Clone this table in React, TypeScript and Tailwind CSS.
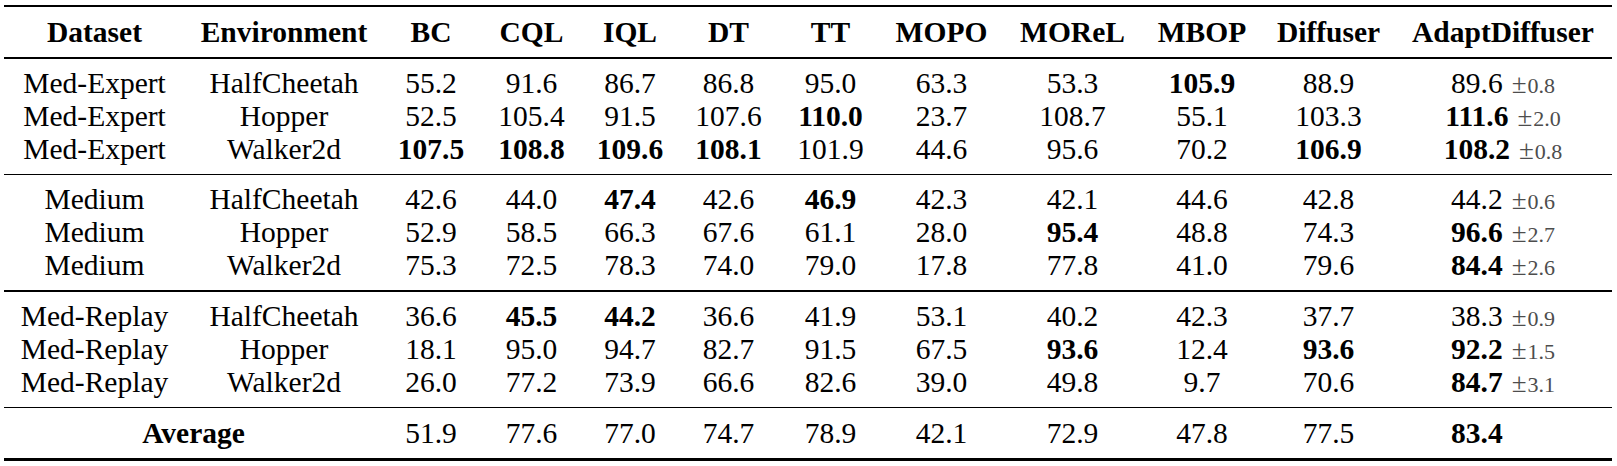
import { Fragment } from "react";

type Row = {
  dataset: string;
  env: string;
  values: string[];
  adapt: string;
  std?: string;
};

// "*" prefix marks the best score in a row (bold)
const groups: Row[][] = [
  [
    { dataset: "Med-Expert", env: "HalfCheetah", values: ["55.2", "91.6", "86.7", "86.8", "95.0", "63.3", "53.3", "*105.9", "88.9"], adapt: "89.6", std: "0.8" },
    { dataset: "Med-Expert", env: "Hopper", values: ["52.5", "105.4", "91.5", "107.6", "*110.0", "23.7", "108.7", "55.1", "103.3"], adapt: "*111.6", std: "2.0" },
    { dataset: "Med-Expert", env: "Walker2d", values: ["*107.5", "*108.8", "*109.6", "*108.1", "101.9", "44.6", "95.6", "70.2", "*106.9"], adapt: "*108.2", std: "0.8" },
  ],
  [
    { dataset: "Medium", env: "HalfCheetah", values: ["42.6", "44.0", "*47.4", "42.6", "*46.9", "42.3", "42.1", "44.6", "42.8"], adapt: "44.2", std: "0.6" },
    { dataset: "Medium", env: "Hopper", values: ["52.9", "58.5", "66.3", "67.6", "61.1", "28.0", "*95.4", "48.8", "74.3"], adapt: "*96.6", std: "2.7" },
    { dataset: "Medium", env: "Walker2d", values: ["75.3", "72.5", "78.3", "74.0", "79.0", "17.8", "77.8", "41.0", "79.6"], adapt: "*84.4", std: "2.6" },
  ],
  [
    { dataset: "Med-Replay", env: "HalfCheetah", values: ["36.6", "*45.5", "*44.2", "36.6", "41.9", "53.1", "40.2", "42.3", "37.7"], adapt: "38.3", std: "0.9" },
    { dataset: "Med-Replay", env: "Hopper", values: ["18.1", "95.0", "94.7", "82.7", "91.5", "67.5", "*93.6", "12.4", "*93.6"], adapt: "*92.2", std: "1.5" },
    { dataset: "Med-Replay", env: "Walker2d", values: ["26.0", "77.2", "73.9", "66.6", "82.6", "39.0", "49.8", "9.7", "70.6"], adapt: "*84.7", std: "3.1" },
  ],
];

const average = ["51.9", "77.6", "77.0", "74.7", "78.9", "42.1", "72.9", "47.8", "77.5"];

const headers = ["Dataset", "Environment", "BC", "CQL", "IQL", "DT", "TT", "MOPO", "MOReL", "MBOP", "Diffuser", "AdaptDiffuser"];

const grid =
  "grid grid-cols-[181px_198px_96px_105px_92px_105px_99px_123px_139px_120px_133px_216px]";

function Num({ v }: { v: string }) {
  const bold = v.startsWith("*");
  return <span className={bold ? "font-bold" : ""}>{bold ? v.slice(1) : v}</span>;
}

function Adapt({ v, std }: { v: string; std?: string }) {
  return (
    <span className="flex items-baseline">
      <Num v={v} />
      <span className={"ml-[9px] flex items-baseline text-[#4d4d4d]" + (std ? "" : " invisible")}>
        <span className="text-[27px]">±</span>
        <span className="ml-[1px] text-[22px]">{std ?? "0.0"}</span>
      </span>
    </span>
  );
}

function Rule({ thick }: { thick?: boolean }) {
  return <div className={thick ? "h-[2.3px] bg-black" : "h-[1.5px] bg-black"} />;
}

export default function App() {
  return (
    <div className="bg-white w-[1617px] h-[466px] pt-[5px] px-[4px] text-black text-[29.5px] leading-none [font-family:'Liberation_Serif','Times_New_Roman',serif]">
      <div className="w-[1608px]">
        <Rule thick />
        <div className={`${grid} h-[50px] items-center font-bold`}>
          {headers.map((h) => (
            <div key={h} className="text-center">
              {h}
            </div>
          ))}
        </div>
        <Rule />
        {groups.map((rows, gi) => (
          <Fragment key={gi}>
            <div className="py-[8px]">
              {rows.map((r) => (
                <div key={r.dataset + r.env} className={`${grid} h-[33px] items-center`}>
                  <div className="text-center">{r.dataset}</div>
                  <div className="text-center">{r.env}</div>
                  {r.values.map((v, i) => (
                    <div key={i} className="text-center">
                      <Num v={v} />
                    </div>
                  ))}
                  <div className="flex justify-center">
                    <Adapt v={r.adapt} std={r.std} />
                  </div>
                </div>
              ))}
            </div>
            <Rule />
          </Fragment>
        ))}
        <div className={`${grid} h-[50px] items-center`}>
          <div className="col-span-2 text-center font-bold">Average</div>
          {average.map((v, i) => (
            <div key={i} className="text-center">
              <Num v={v} />
            </div>
          ))}
          <div className="flex justify-center">
            <Adapt v="*83.4" />
          </div>
        </div>
        <Rule thick />
      </div>
    </div>
  );
}
